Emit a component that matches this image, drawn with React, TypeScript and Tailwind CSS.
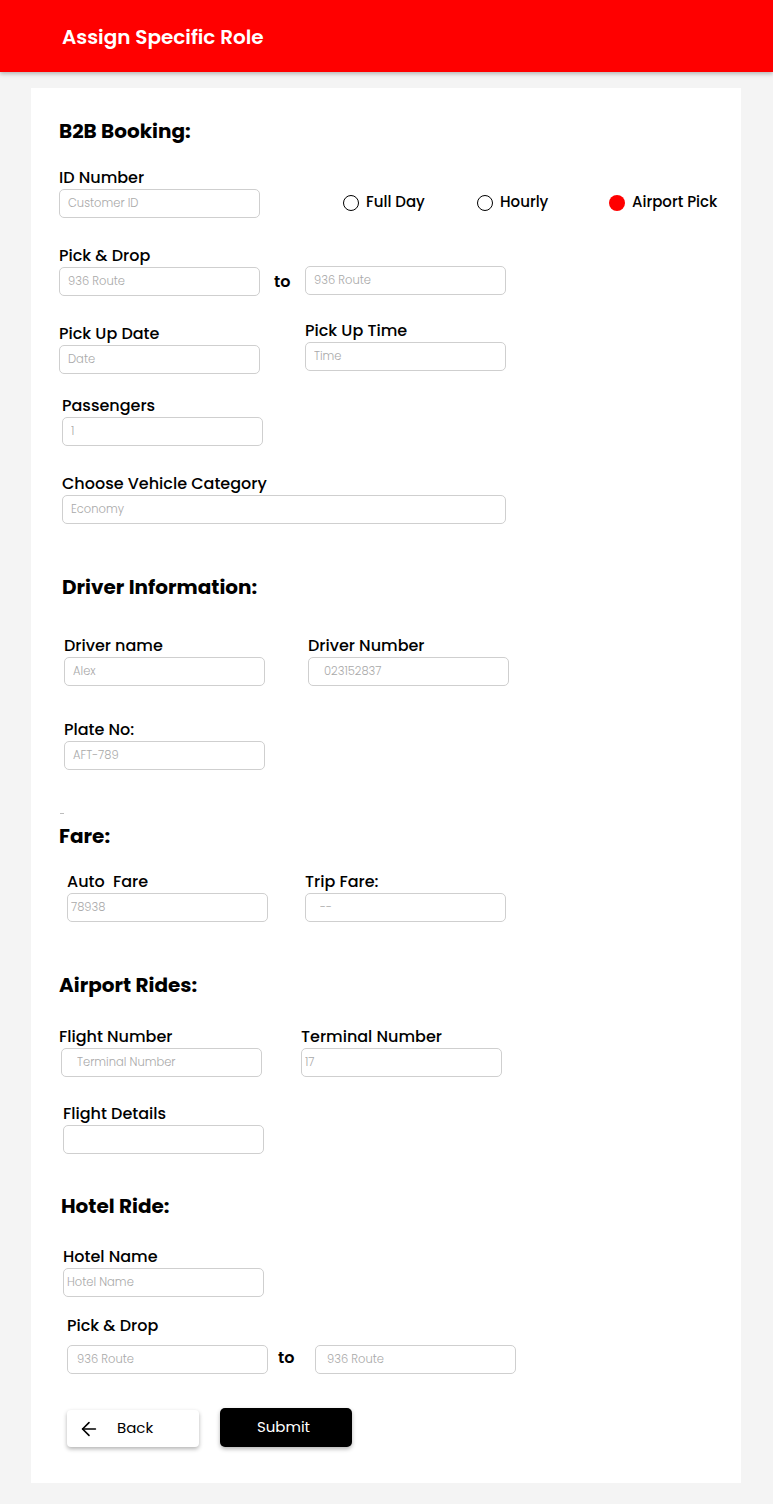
import { ArrowLeft } from 'lucide-react';
import type { ReactNode } from 'react';

const font = { fontFamily: '"Poppins", "Open Sans", "Noto Sans", sans-serif' };

function Label({ children, className = '' }: { children: ReactNode; className?: string }) {
  return <div className={`h-5 text-[16px] leading-[22px] font-medium text-black ${className}`}>{children}</div>;
}

function Field({
  placeholder,
  className = 'w-[201px]',
  pad = 'pl-2',
}: {
  placeholder?: string;
  className?: string;
  pad?: string;
}) {
  return (
    <input
      placeholder={placeholder}
      className={`h-[29px] rounded-[5px] border border-[#cfcfcf] bg-white text-[11.5px] font-light outline-none placeholder:text-[#a9a9a9] ${pad} ${className}`}
    />
  );
}

function Heading({ children, className = '' }: { children: ReactNode; className?: string }) {
  return <h2 className={`h-[26px] text-[20px] leading-[26px] font-bold text-black ${className}`}>{children}</h2>;
}

function Radio({ label, checked = false, width }: { label: string; checked?: boolean; width: string }) {
  return (
    <div className={`flex items-center gap-[7px] ${width}`}>
      <span
        className={`h-4 w-4 rounded-full ${checked ? 'bg-[#ff0000]' : 'border-[1.5px] border-black bg-white'}`}
      />
      <span className="text-[15px] font-medium text-black">{label}</span>
    </div>
  );
}

function To({ width }: { width: string }) {
  return <div className={`${width} pl-[14px] text-[16px] font-semibold text-black`}>to</div>;
}

export default function App() {
  return (
    <div className="min-h-[1504px] bg-[#f4f4f4] pb-[21px]" style={font}>
      <header className="flex h-[72px] items-center bg-[#ff0000] pl-[62px] shadow-[0_2px_4px_rgba(0,0,0,0.25)]">
        <h1 className="mt-[2px] text-[20px] font-semibold text-white">Assign Specific Role</h1>
      </header>

      <main className="mt-4 ml-[31px] w-[710px] bg-white pt-[30px] pb-[36px] pl-[28px]">
        {/* B2B Booking */}
        <Heading>B2B Booking:</Heading>

        <div className="mt-[23px] flex items-end">
          <div>
            <Label>ID Number</Label>
            <div className="mt-[2px]">
              <Field placeholder="Customer ID" />
            </div>
          </div>
          <div className="ml-[83px] flex h-[29px] items-center -translate-y-[1px]">
            <Radio label="Full Day" width="w-[134px]" />
            <Radio label="Hourly" width="w-[132px]" />
            <Radio label="Airport Pick" checked width="w-auto" />
          </div>
        </div>

        <div className="mt-[27px]">
          <Label>Pick &amp; Drop</Label>
          <div className="mt-[2px] flex items-center">
            <Field placeholder="936 Route" />
            <To width="w-[45px]" />
            <div className="-mt-[2px]">
              <Field placeholder="936 Route" />
            </div>
          </div>
        </div>

        <div className="mt-[27px] flex items-start gap-[45px]">
          <div>
            <Label>Pick Up Date</Label>
            <div className="mt-[2px]">
              <Field placeholder="Date" />
            </div>
          </div>
          <div className="-mt-[3px]">
            <Label>Pick Up Time</Label>
            <div className="mt-[2px]">
              <Field placeholder="Time" />
            </div>
          </div>
        </div>

        <div className="mt-[21px] ml-[3px]">
          <Label>Passengers</Label>
          <div className="mt-[2px]">
            <Field placeholder="1" />
          </div>
        </div>

        <div className="mt-[27px] ml-[3px]">
          <Label>Choose Vehicle Category</Label>
          <div className="mt-[2px]">
            <Field placeholder="Economy" className="w-[444px]" />
          </div>
        </div>

        {/* Driver Information */}
        <Heading className="mt-[50px] ml-[3px]">Driver Information:</Heading>

        <div className="mt-[35px] ml-[5px] flex gap-[43px]">
          <div>
            <Label>Driver name</Label>
            <div className="mt-[2px]">
              <Field placeholder="Alex" />
            </div>
          </div>
          <div>
            <Label>Driver Number</Label>
            <div className="mt-[2px]">
              <Field placeholder="023152837" pad="pl-[15px]" />
            </div>
          </div>
        </div>

        <div className="mt-[33px] ml-[5px]">
          <Label>Plate No:</Label>
          <div className="mt-[2px]">
            <Field placeholder="AFT-789" />
          </div>
        </div>

        {/* Fare */}
        <div className="mt-[43px] ml-[1px] h-px w-1 bg-[#bdbdbd]" />
        <Heading className="mt-[9px]">Fare:</Heading>

        <div className="mt-[22px] flex">
          <div className="ml-[8px]">
            <Label>Auto&nbsp; Fare</Label>
            <div className="mt-[2px]">
              <Field placeholder="78938" pad="pl-[3px]" />
            </div>
          </div>
          <div className="ml-[37px]">
            <Label>Trip Fare:</Label>
            <div className="mt-[2px]">
              <Field placeholder="--" pad="pl-[14px]" />
            </div>
          </div>
        </div>

        {/* Airport Rides */}
        <Heading className="mt-[50px]">Airport Rides:</Heading>

        <div className="mt-[28px] flex">
          <div>
            <Label>Flight Number</Label>
            <div className="mt-[2px] ml-[2px]">
              <Field placeholder="Terminal Number" pad="pl-[15px]" />
            </div>
          </div>
          <div className="ml-[39px]">
            <Label>Terminal Number</Label>
            <div className="mt-[2px]">
              <Field placeholder="17" pad="pl-[3px]" />
            </div>
          </div>
        </div>

        <div className="mt-[26px] ml-[4px]">
          <Label>Flight Details</Label>
          <div className="mt-[2px]">
            <Field />
          </div>
        </div>

        {/* Hotel Ride */}
        <Heading className="mt-[39px] ml-[2px]">Hotel Ride:</Heading>

        <div className="mt-[27px] ml-[4px]">
          <Label>Hotel Name</Label>
          <div className="mt-[2px]">
            <Field placeholder="Hotel Name" pad="pl-[3px]" />
          </div>
        </div>

        <div className="mt-[18px] ml-[8px]">
          <Label>Pick &amp; Drop</Label>
          <div className="mt-[10px] flex items-center">
            <Field placeholder="936 Route" pad="pl-[9px]" />
            <div className="-mt-[4px] w-[47px] pl-[10px] text-[16px] font-semibold text-black">to</div>
            <Field placeholder="936 Route" pad="pl-[11px]" />
          </div>
        </div>

        {/* Actions */}
        <div className="mt-[34px] ml-[8px] flex items-end gap-[21px]">
          <button className="flex h-[37px] w-[132px] items-center rounded-[4px] bg-white pl-[11px] text-[15px] font-normal text-black shadow-[0_2px_4px_rgba(0,0,0,0.3)]">
            <ArrowLeft size={22} strokeWidth={1.75} />
            <span className="ml-[17px]">Back</span>
          </button>
          <button className="h-[39px] w-[132px] rounded-[5px] bg-black pr-[5px] text-[15px] font-normal text-white shadow-[0_2px_4px_rgba(0,0,0,0.3)]">
            Submit
          </button>
        </div>
      </main>
    </div>
  );
}
